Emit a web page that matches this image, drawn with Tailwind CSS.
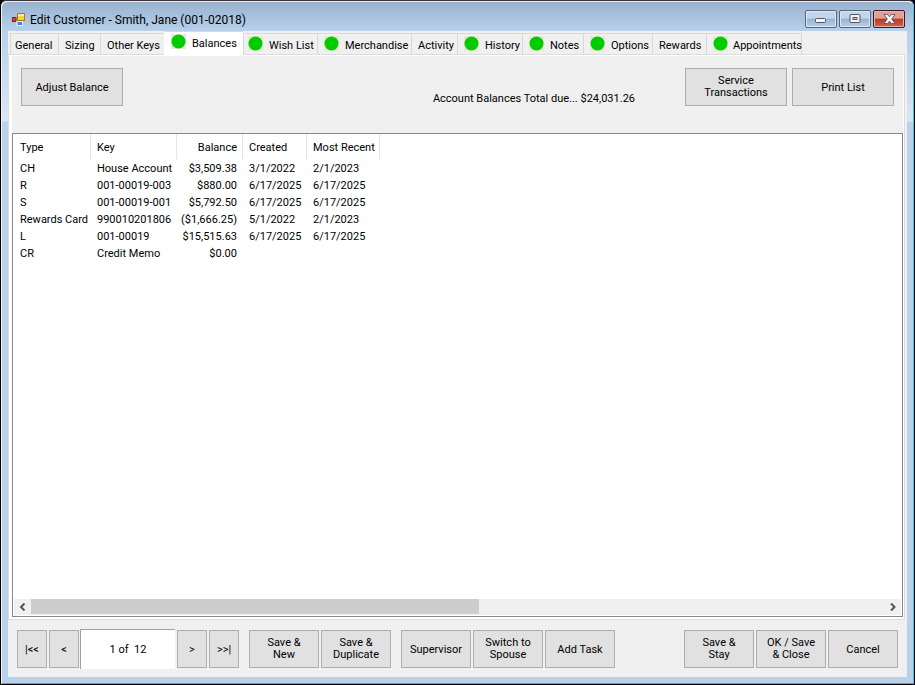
<!DOCTYPE html>
<html lang="en">
<head>
<meta charset="utf-8">
<meta name="viewport" content="width=device-width, initial-scale=1">
<title>Edit Customer - Smith, Jane (001-02018)</title>
<script src="https://cdn.jsdelivr.net/npm/@tailwindcss/browser@4"></script>
</head>
<body class="bg-black font-[Roboto,Arial,sans-serif] text-[11px] leading-[12px] text-black">
<svg class="hidden" aria-hidden="true">
  <symbol id="dot" viewBox="0 0 15 15"><rect width="15" height="15" fill="#e8e8d8"/><circle cx="7.5" cy="7.5" r="7" fill="#00cc00"/></symbol>
</svg>
<div class="flex h-screen flex-col rounded-t-md border border-t-[#3a3236] border-r-black border-b-black border-l-black bg-[#b9d1ea]">
<div class="flex min-h-0 flex-1 flex-col rounded-t-md border border-t-[#e4edf7] border-r-[#35c5e6] border-b-[#35b6cf] border-l-[#eef4fb]">

  <header class="flex h-[29px] shrink-0 items-start rounded-t-md bg-linear-to-b from-[#98b2d0] to-[#b8d0ea] pr-[8px] pl-[10px]">
    <svg class="mt-[11px] mr-[5px] h-[13px] w-[13px]" viewBox="0 0 13 13" aria-hidden="true">
      <rect x="5.500" y=".5" width="7" height="7" fill="#ffcf3a" stroke="#a87a10"/><path d="M6 1h6v2H6z" fill="#ffe9a0"/>
      <rect x=".5" y="4.500" width="3.500" height="4" fill="#d8432c" stroke="#8e1c10"/>
      <rect x="5" y="8.500" width="5.500" height="4" fill="#4a80e0" stroke="#e8f0ff"/>
    </svg>
    <h1 class="mt-[10px] flex-1 text-[12px] leading-[16px]">Edit Customer - Smith, Jane (001-02018)</h1>
    <div class="mt-[8px] flex gap-[2px]">
      <button aria-label="Minimize" class="flex h-[18px] w-8 items-center justify-center rounded-xs border border-[#53657f] bg-linear-to-b from-[#c3d5e9] from-45% via-[#98b3d1] via-50% to-[#b8d2ea] shadow-[inset_0_0_0_1px_#dce8f4]">
        <svg class="mt-[3px]" width="12" height="6" viewBox="0 0 12 6"><rect x=".5" y=".5" width="10" height="4" rx="1" fill="#f4f4f4" stroke="#535666"/></svg>
      </button>
      <button aria-label="Maximize" class="flex h-[18px] w-8 items-center justify-center rounded-xs border border-[#53657f] bg-linear-to-b from-[#c3d5e9] from-45% via-[#98b3d1] via-50% to-[#b8d2ea] shadow-[inset_0_0_0_1px_#dce8f4]">
        <svg width="12" height="10" viewBox="0 0 12 10"><rect x="1" y=".5" width="10" height="8" rx="1" fill="#f4f4f4" stroke="#535666"/><rect x="4" y="3.500" width="4" height="2" fill="#9fb8d5" stroke="#535666"/></svg>
      </button>
      <button aria-label="Close" class="flex h-[18px] w-8 items-center justify-center rounded-xs border border-[#431422] bg-linear-to-b from-[#e0a095] from-45% via-[#b83a26] via-50% to-[#d0624a] shadow-[inset_0_0_0_1px_#e8b4aa]">
        <svg width="13" height="10" viewBox="0 0 13 10"><path d="M1 .5h3.500l2 2.300 2-2.300H12L8.700 5 12 9.500H8.500l-2-2.300-2 2.300H1L4.300 5z" fill="#f6f6f6" stroke="#5a5a68" stroke-width=".9"/></svg>
      </button>
    </div>
  </header>

  <div class="flex min-h-0 flex-1 bg-linear-to-b from-[#b8d0ea] via-[#dae6f4] via-[90px] to-[#b9d1ea] to-[91px] pr-[6px] pb-[6px] pl-[6px]">
  <main class="flex min-w-0 flex-1 flex-col bg-[#f0f0f0]">

    <nav role="tablist" aria-label="Customer sections" class="flex h-[23px] shrink-0 items-end pl-[2px]">
      <button role="tab" class="flex h-[21px] w-[49px] items-start border border-b-0 border-[#d9d9d9] pt-[6px] pl-[4px]">General</button>
      <button role="tab" class="flex h-[21px] w-[42px] items-start border border-b-0 border-l-0 border-[#d9d9d9] pt-[6px] pl-[6px]">Sizing</button>
      <button role="tab" class="flex h-[21px] w-[63px] items-start border-t border-[#d9d9d9] pt-[6px] pl-[6px]">Other Keys</button>
      <button role="tab" aria-selected="true" class="z-10 -mb-px flex h-[24px] w-[79px] items-start border-t border-[#d9d9d9] bg-white pt-[2px] pl-[7px]"><svg class="mr-[6px] h-[15px] w-[15px] shrink-0"><use href="#dot"/></svg><span class="mt-[4px]">Balances</span></button>
      <button role="tab" class="flex h-[21px] w-[75px] items-start border border-b-0 border-[#d9d9d9] pt-[2px] pl-[4px]"><svg class="mr-[6px] h-[15px] w-[15px] shrink-0"><use href="#dot"/></svg><span class="mt-[4px]">Wish List</span></button>
      <button role="tab" class="flex h-[21px] w-[94px] items-start border border-b-0 border-l-0 border-[#d9d9d9] pt-[2px] pl-[6px]"><svg class="mr-[6px] h-[15px] w-[15px] shrink-0"><use href="#dot"/></svg><span class="mt-[4px]">Merchandise</span></button>
      <button role="tab" class="flex h-[21px] w-[46px] items-start border border-b-0 border-l-0 border-[#d9d9d9] pt-[6px] pl-[6px]">Activity</button>
      <button role="tab" class="flex h-[21px] w-[65px] items-start border border-b-0 border-l-0 border-[#d9d9d9] pt-[2px] pl-[6px]"><svg class="mr-[6px] h-[15px] w-[15px] shrink-0"><use href="#dot"/></svg><span class="mt-[4px]">History</span></button>
      <button role="tab" class="flex h-[21px] w-[61px] items-start border border-b-0 border-l-0 border-[#d9d9d9] pt-[2px] pl-[6px]"><svg class="mr-[6px] h-[15px] w-[15px] shrink-0"><use href="#dot"/></svg><span class="mt-[4px]">Notes</span></button>
      <button role="tab" class="flex h-[21px] w-[69px] items-start border border-b-0 border-l-0 border-[#d9d9d9] pt-[2px] pl-[6px]"><svg class="mr-[6px] h-[15px] w-[15px] shrink-0"><use href="#dot"/></svg><span class="mt-[4px]">Options</span></button>
      <button role="tab" class="flex h-[21px] w-[54px] items-start border border-b-0 border-l-0 border-[#d9d9d9] pt-[6px] pl-[6px]">Rewards</button>
      <button role="tab" class="flex h-[21px] w-[95px] items-start border border-b-0 border-l-0 border-[#d9d9d9] pt-[2px] pl-[6px]"><svg class="mr-[5px] h-[15px] w-[15px] shrink-0"><use href="#dot"/></svg><span class="mt-[4px]">Appointments</span></button>
    </nav>

    <section role="tabpanel" aria-label="Balances" class="mr-[2px] flex min-h-0 flex-1 flex-col border border-[#dcdcdc] bg-white pt-px pr-px pb-[2px] pl-[3px]">
      <div class="flex h-[77px] shrink-0 items-start bg-[#f0f0f0] pt-[12px] pr-[9px] pl-[9px]">
        <button class="h-[38px] w-[102px] border border-[#adadad] bg-[#e1e1e1] pt-[2px]">Adjust Balance</button>
        <output class="mt-[25px] mr-[50px] flex-1 text-right">Account Balances Total due... $24,031.26</output>
        <button class="mr-[5px] h-[38px] w-[102px] border border-[#adadad] bg-[#e1e1e1]">Service<br>Transactions</button>
        <button class="h-[38px] w-[102px] border border-[#adadad] bg-[#e1e1e1] pt-[2px]">Print List</button>
      </div>

      <div class="flex min-h-0 flex-1 flex-col border border-[#828790] bg-white">
        <div class="min-h-0 flex-1 overflow-hidden">
          <table class="w-[367px] table-fixed border-separate border-spacing-0 text-left whitespace-nowrap">
            <colgroup><col class="w-[78px]"><col class="w-[86px]"><col class="w-[66px]"><col class="w-[64px]"><col class="w-[73px]"></colgroup>
            <thead>
              <tr class="h-[25px]">
                <th class="border-r border-[#e5e5e5] pt-[2px] pl-[7px] font-normal">Type</th>
                <th class="border-r border-[#e5e5e5] pt-[2px] pl-[6px] font-normal">Key</th>
                <th class="border-r border-[#e5e5e5] pt-[2px] pr-[5px] text-right font-normal">Balance</th>
                <th class="border-r border-[#e5e5e5] pt-[2px] pl-[6px] font-normal">Created</th>
                <th class="border-r border-[#e5e5e5] pt-[2px] pl-[6px] font-normal">Most Recent</th>
              </tr>
            </thead>
            <tbody class="[&_td]:pt-[2px]">
              <tr class="h-[17px]"><td class="pl-[7px]">CH</td><td class="pl-[6px]">House Account</td><td class="pr-[6px] text-right">$3,509.38</td><td class="pl-[6px]">3/1/2022</td><td class="pl-[6px]">2/1/2023</td></tr>
              <tr class="h-[17px]"><td class="pl-[7px]">R</td><td class="pl-[6px]">001-00019-003</td><td class="pr-[6px] text-right">$880.00</td><td class="pl-[6px]">6/17/2025</td><td class="pl-[6px]">6/17/2025</td></tr>
              <tr class="h-[17px]"><td class="pl-[7px]">S</td><td class="pl-[6px]">001-00019-001</td><td class="pr-[6px] text-right">$5,792.50</td><td class="pl-[6px]">6/17/2025</td><td class="pl-[6px]">6/17/2025</td></tr>
              <tr class="h-[17px]"><td class="pl-[7px]">Rewards Card</td><td class="pl-[6px]">990010201806</td><td class="pr-[6px] text-right">($1,666.25)</td><td class="pl-[6px]">5/1/2022</td><td class="pl-[6px]">2/1/2023</td></tr>
              <tr class="h-[17px]"><td class="pl-[7px]">L</td><td class="pl-[6px]">001-00019</td><td class="pr-[6px] text-right">$15,515.63</td><td class="pl-[6px]">6/17/2025</td><td class="pl-[6px]">6/17/2025</td></tr>
              <tr class="h-[17px]"><td class="pl-[7px]">CR</td><td class="pl-[6px]">Credit Memo</td><td class="pr-[6px] text-right">$0.00</td><td></td><td></td></tr>
            </tbody>
          </table>
        </div>
        <div class="mx-px mb-px flex h-[16px] shrink-0 bg-[#f0f0f0]">
          <button aria-label="Scroll left" class="flex w-[17px] items-center justify-center"><svg width="8" height="8" viewBox="0 0 8 8"><path d="M5.500 .5 2 4l3.500 3.500" fill="none" stroke="#555" stroke-width="2"/></svg></button>
          <div class="flex-1"><div class="h-[15px] w-[52.5%] bg-[#cdcdcd]"></div></div>
          <button aria-label="Scroll right" class="flex w-[17px] items-center justify-center"><svg width="8" height="8" viewBox="0 0 8 8"><path d="M2 .5 5.500 4 2 7.500" fill="none" stroke="#555" stroke-width="2"/></svg></button>
        </div>
      </div>
    </section>

    <footer class="flex h-[57px] shrink-0 items-start pt-[9px] pr-[9px] pl-[9px]">
      <div class="flex items-center">
        <button aria-label="First" class="mr-[2px] h-[38px] w-[30px] border border-[#adadad] bg-[#e1e1e1] pt-[2px]">|&lt;&lt;</button>
        <button aria-label="Previous" class="mr-px h-[38px] w-[30px] border border-[#adadad] bg-[#e1e1e1] pt-[2px]">&lt;</button>
        <input aria-label="Record position" value="1 of  12" class="mr-[2px] h-[40px] w-[95px] border-t border-l border-[#a0a0a0] bg-white text-center">
        <button aria-label="Next" class="mr-[2px] h-[38px] w-[30px] border border-[#adadad] bg-[#e1e1e1] pt-[2px]">&gt;</button>
        <button aria-label="Last" class="h-[38px] w-[30px] border border-[#adadad] bg-[#e1e1e1] pt-[2px]">&gt;&gt;|</button>
      </div>
      <div class="mt-px ml-[10px] flex gap-[2px]">
        <button class="h-[38px] w-[70px] border border-[#adadad] bg-[#e1e1e1]">Save &amp;<br>New</button>
        <button class="h-[38px] w-[70px] border border-[#adadad] bg-[#e1e1e1]">Save &amp;<br>Duplicate</button>
      </div>
      <div class="mt-px ml-[10px] flex gap-[2px]">
        <button class="h-[38px] w-[70px] border border-[#adadad] bg-[#e1e1e1] pt-[2px]">Supervisor</button>
        <button class="h-[38px] w-[70px] border border-[#adadad] bg-[#e1e1e1]">Switch to<br>Spouse</button>
        <button class="h-[38px] w-[70px] border border-[#adadad] bg-[#e1e1e1] pt-[2px]">Add Task</button>
      </div>
      <div class="mt-px ml-auto flex gap-[2px]">
        <button class="h-[38px] w-[70px] border border-[#adadad] bg-[#e1e1e1]">Save &amp;<br>Stay</button>
        <button class="h-[38px] w-[70px] border border-[#adadad] bg-[#e1e1e1]">OK / Save<br>&amp; Close</button>
        <button class="h-[38px] w-[70px] border border-[#adadad] bg-[#e1e1e1] pt-[2px]">Cancel</button>
      </div>
    </footer>
  </main>
  </div>
</div>
</div>
</body>
</html>
